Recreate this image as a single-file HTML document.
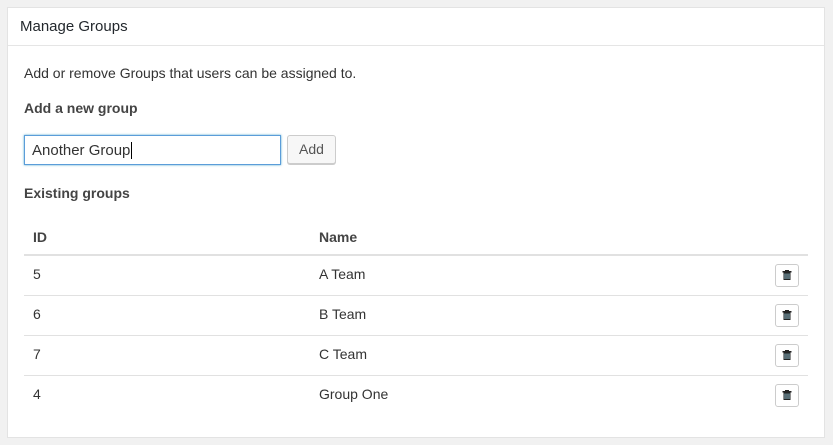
<html><head><style>
body{margin:0;background:#f1f1f1;font-family:"Liberation Sans",sans-serif;font-size:14px;color:#333;}
.p{position:absolute;left:7px;top:7px;width:816px;height:429px;background:#fff;border:1px solid #e3e3e3;}
.h{height:37px;border-bottom:1px solid #e5e5e5;padding-left:12px;line-height:37px;font-size:15px;color:#23282d;}
.a{position:absolute;white-space:nowrap;}
.b{font-weight:bold;color:#444;}
.in{position:absolute;left:16px;top:127px;width:257px;height:30px;border:1px solid #5b9dd9;box-shadow:0 0 2px rgba(30,140,190,.8);box-sizing:border-box;padding-left:7px;line-height:30px;font-size:15px;}
.btn{position:absolute;left:279px;top:127px;width:49px;height:29px;border:1px solid #ccc;border-radius:3px;background:#f7f7f7;box-sizing:border-box;text-align:center;line-height:27px;color:#555;box-shadow:0 1px 0 #ccc;}
.ln{position:absolute;left:16px;width:784px;height:1px;background:#e1e1e1;}
.tb{position:absolute;left:767px;width:24px;height:23px;border:1px solid #ccc;border-radius:3px;box-sizing:border-box;background:#fff;}
</style></head><body>
<div class="p">
<div class="h">Manage Groups</div>
<div class="a" style="left:16px;top:57px">Add or remove Groups that users can be assigned to.</div>
<div class="a b" style="left:16px;top:92px">Add a new group</div>
<div class="in">Another Group<span style="border-left:1px solid #000;margin-left:1px"></span></div>
<div class="btn">Add</div>
<div class="a b" style="left:16px;top:177px">Existing groups</div>
<div class="a b" style="left:25px;top:221px">ID</div>
<div class="a b" style="left:311px;top:221px">Name</div>
<div class="ln" style="top:246px;height:2px"></div>
<div class="a" style="left:25px;top:258px">5</div><div class="a" style="left:311px;top:258px">A Team</div>
<div class="ln" style="top:287px"></div>
<div class="a" style="left:25px;top:298px">6</div><div class="a" style="left:311px;top:298px">B Team</div>
<div class="ln" style="top:327px"></div>
<div class="a" style="left:25px;top:338px">7</div><div class="a" style="left:311px;top:338px">C Team</div>
<div class="ln" style="top:367px"></div>
<div class="a" style="left:25px;top:378px">4</div><div class="a" style="left:311px;top:378px">Group One</div>
<div class="tb" style="top:256px"><svg width="22" height="21" viewBox="0 0 22 21"><path d="M6.5 6h9v1.5h-1v7.5h-7v-7.5h-1z M9 5h4v1h-4z" fill="#222"/><path d="M9 8.5v5.5M11 8.5v5.5M13 8.5v5.5" stroke="#9cd" stroke-width=".9"/></svg></div>
<div class="tb" style="top:296px"><svg width="22" height="21" viewBox="0 0 22 21"><path d="M6.5 6h9v1.5h-1v7.5h-7v-7.5h-1z M9 5h4v1h-4z" fill="#222"/><path d="M9 8.5v5.5M11 8.5v5.5M13 8.5v5.5" stroke="#9cd" stroke-width=".9"/></svg></div>
<div class="tb" style="top:336px"><svg width="22" height="21" viewBox="0 0 22 21"><path d="M6.5 6h9v1.5h-1v7.5h-7v-7.5h-1z M9 5h4v1h-4z" fill="#222"/><path d="M9 8.5v5.5M11 8.5v5.5M13 8.5v5.5" stroke="#9cd" stroke-width=".9"/></svg></div>
<div class="tb" style="top:376px"><svg width="22" height="21" viewBox="0 0 22 21"><path d="M6.5 6h9v1.5h-1v7.5h-7v-7.5h-1z M9 5h4v1h-4z" fill="#222"/><path d="M9 8.5v5.5M11 8.5v5.5M13 8.5v5.5" stroke="#9cd" stroke-width=".9"/></svg></div>
</div>
</body></html>
